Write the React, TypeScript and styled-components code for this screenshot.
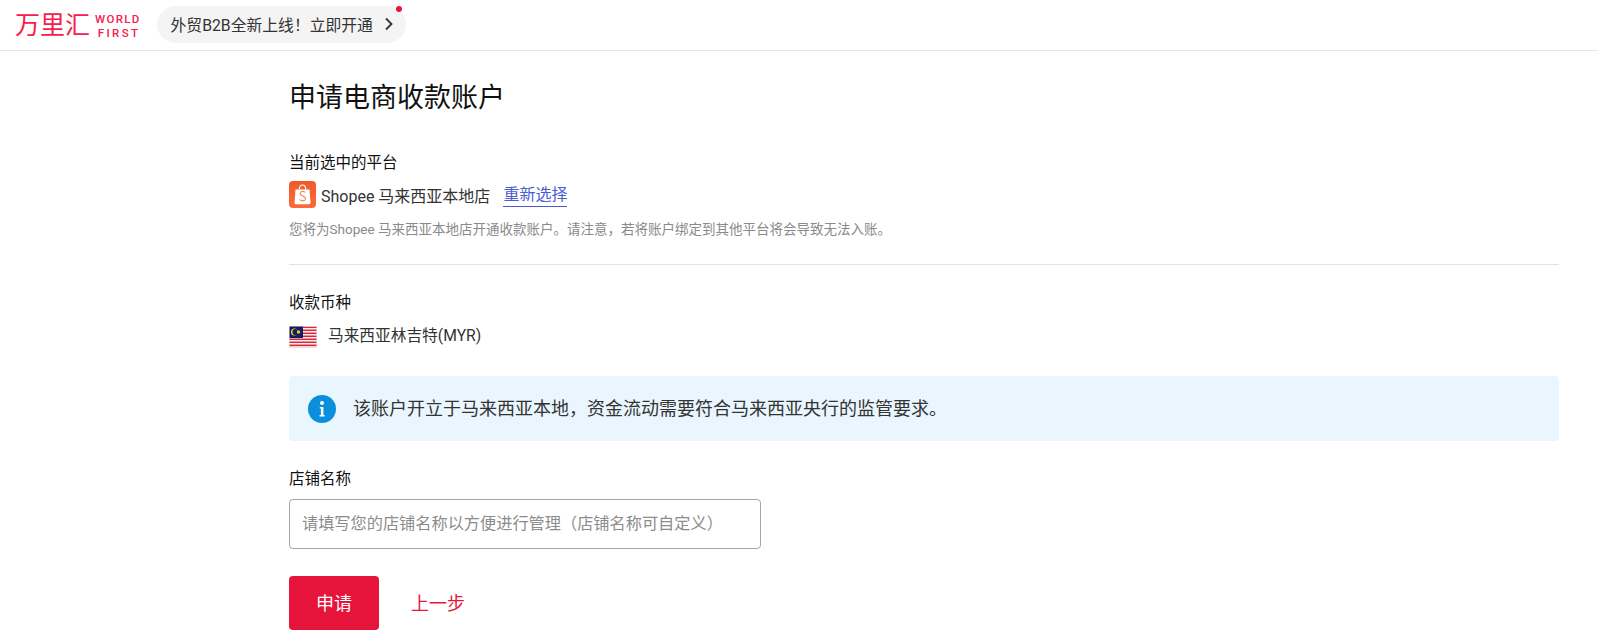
import React from "react";
import styled, { createGlobalStyle } from "styled-components";

const GlobalStyle = createGlobalStyle`
  html, body {
    margin: 0;
    padding: 0;
    background: #fff;
    font-family: Roboto, "Noto Sans CJK SC", sans-serif;
    color: #1a1a1a;
  }
  * { box-sizing: border-box; }
`;

const Page = styled.div`
  width: 1598px;
  height: 644px;
  overflow: hidden;
`;

const Header = styled.header`
  height: 51px;
  border-bottom: 1px solid #e5e5e5;
  display: flex;
  align-items: center;
  padding: 0 0 2px 15px;
`;

const Logo = styled.div`
  display: flex;
  align-items: center;
  gap: 5px;
  margin-top: 3px;
  color: #f5204f;
`;

const LogoName = styled.span`
  font-size: 25px;
  font-weight: 400;
  line-height: 28px;
`;

const LogoLatin = styled.div`
  font-family: Roboto, sans-serif;
  font-weight: 500;
  font-size: 11.5px;
  line-height: 14px;
`;

const LogoLine = styled.div<{ $spacing: number }>`
  letter-spacing: ${(p) => p.$spacing}px;
  text-align: right;
`;

const Promo = styled.div`
  position: relative;
  margin-left: 16px;
  width: 249px;
  height: 37px;
  border-radius: 19px;
  background: #f4f4f4;
  display: flex;
  align-items: center;
  justify-content: space-between;
  padding: 0 12px 0 14px;
  font-size: 15.8px;
  color: #333;
`;

const PromoDot = styled.span`
  position: absolute;
  top: 0;
  right: 4px;
  width: 6px;
  height: 6px;
  border-radius: 50%;
  background: #e8143c;
`;

const Main = styled.main`
  padding: 0 39px 0 289px;
`;

const Title = styled.h1`
  margin: 0;
  padding-top: 29px;
  font-size: 27px;
  font-weight: 400;
  line-height: 36px;
  color: #111;
`;

const Label = styled.div`
  font-size: 15.5px;
  font-weight: 400;
  line-height: 20px;
  color: #111;
`;

const PlatformSection = styled.section`
  margin-top: 37px;
  padding-bottom: 26px;
  border-bottom: 1px solid #e2e2e2;
`;

const PlatformRow = styled.div`
  display: flex;
  align-items: center;
  margin-top: 8px;
  height: 27px;
  font-size: 16px;
  color: #333;
`;

const PlatformName = styled.span`
  margin-left: 5px;
`;

const Reselect = styled.a`
  margin-left: 13px;
  padding-top: 2px;
  color: #4a5bd4;
  border-bottom: 1px solid #4a5bd4;
  line-height: 22px;
`;

const Hint = styled.p`
  margin: 12px 0 0;
  font-size: 13.5px;
  line-height: 18px;
  color: #8a8a8a;
`;

const CurrencySection = styled.section`
  margin-top: 28px;
`;

const CurrencyRow = styled.div`
  display: flex;
  align-items: center;
  gap: 11px;
  margin-top: 12px;
  font-size: 15.7px;
  line-height: 22px;
  color: #333;
  svg {
    margin: 1px 0 -1px;
  }
`;

const Notice = styled.div`
  margin-top: 29px;
  height: 65px;
  border-radius: 4px;
  background: #e9f6fe;
  display: flex;
  align-items: center;
  gap: 17px;
  padding: 0 0 3px 19px;
  font-size: 18px;
  color: #333;
`;

const NoticeIcon = styled.span`
  display: flex;
  margin-top: 3px;
`;

const NameSection = styled.section`
  margin-top: 28px;
`;

const NameInput = styled.input`
  display: block;
  margin-top: 10px;
  width: 472px;
  height: 50px;
  border: 1px solid #a6a6a6;
  border-radius: 4px;
  padding: 0 12px 2px;
  font-family: inherit;
  font-size: 16.2px;
  outline: none;
  &::placeholder {
    color: #8c8c8c;
    opacity: 1;
  }
`;

const Actions = styled.div`
  display: flex;
  align-items: center;
  margin-top: 27px;
`;

const Submit = styled.button`
  width: 90px;
  height: 54px;
  border: none;
  border-radius: 4px;
  padding: 0 0 3px;
  background: #e6133b;
  color: #fff;
  font-family: inherit;
  font-size: 18px;
`;

const Back = styled.a`
  margin: 0 0 3px 32px;
  font-size: 18px;
  color: #e8143c;
`;

const ShopeeIcon = () => (
  <svg width="27" height="27" viewBox="0 0 27 27">
    <defs>
      <linearGradient id="shopeeBg" x1="0" y1="0" x2="0" y2="1">
        <stop offset="0" stopColor="#f05a2a" />
        <stop offset="1" stopColor="#fb6a3c" />
      </linearGradient>
    </defs>
    <rect width="27" height="27" rx="4" fill="url(#shopeeBg)" />
    <path d="M6.5 8.5h14l1 13.2a1.6 1.6 0 0 1-1.6 1.6H7.1a1.6 1.6 0 0 1-1.6-1.6z" fill="#fff" />
    <path d="M10.3 8.5c0-6 6.4-6 6.4 0" fill="none" stroke="#fff" strokeWidth="1.2" />
    <path
      d="M16.2 11.4c-1.2-1.2-5-1.4-5 1.2 0 2.9 5.3 2 5.3 5 0 2.8-4.2 2.7-5.8 1.1"
      fill="none"
      stroke="#f05a2a"
      strokeWidth="1"
    />
  </svg>
);

const MalaysiaFlag = () => (
  <svg width="28" height="22" viewBox="0 0 28 22">
    <rect width="28" height="22" fill="#fff" />
    {[0, 3, 6, 9, 12, 15, 18].map((y) => (
      <rect key={y} y={y + 0.5} width="28" height="1.6" fill="#d8283c" />
    ))}
    <rect y="20.5" width="28" height="1" fill="#e8b8bc" />
    <rect width="14" height="12" fill="#0f1f66" />
    <circle cx="5.5" cy="6" r="3.6" fill="#f5c518" />
    <circle cx="6.6" cy="6" r="3.1" fill="#0f1f66" />
    <circle cx="9.5" cy="6" r="1.7" fill="#f5c518" />
    <rect x="0.25" y="0.25" width="27.5" height="21.5" fill="none" stroke="#e6e6e6" strokeWidth="0.5" />
  </svg>
);

const InfoIcon = () => (
  <svg width="28" height="28" viewBox="0 0 28 28">
    <circle cx="14" cy="14" r="14" fill="#0b8fdc" />
    <circle cx="14" cy="8" r="2" fill="#fff" />
    <path d="M11.8 12h3.6v8h1.2v1.6h-5V20h1.3v-6.4h-1.1z" fill="#fff" />
  </svg>
);

export default function App() {
  return (
    <Page>
      <GlobalStyle />
      <Header>
        <Logo>
          <LogoName>万里汇</LogoName>
          <LogoLatin>
            <LogoLine $spacing={1.3}>WORLD</LogoLine>
            <LogoLine $spacing={2.4}>FIRST</LogoLine>
          </LogoLatin>
        </Logo>
        <Promo>
          外贸B2B全新上线！立即开通
          <svg width="10" height="14" viewBox="0 0 10 14">
            <path d="M2 1.5 7.5 7 2 12.5" fill="none" stroke="#333" strokeWidth="1.8" />
          </svg>
          <PromoDot />
        </Promo>
      </Header>
      <Main>
        <Title>申请电商收款账户</Title>
        <PlatformSection>
          <Label>当前选中的平台</Label>
          <PlatformRow>
            <ShopeeIcon />
            <PlatformName>Shopee 马来西亚本地店</PlatformName>
            <Reselect>重新选择</Reselect>
          </PlatformRow>
          <Hint>您将为Shopee 马来西亚本地店开通收款账户。请注意，若将账户绑定到其他平台将会导致无法入账。</Hint>
        </PlatformSection>
        <CurrencySection>
          <Label>收款币种</Label>
          <CurrencyRow>
            <MalaysiaFlag />
            马来西亚林吉特(MYR)
          </CurrencyRow>
        </CurrencySection>
        <Notice>
          <NoticeIcon>
            <InfoIcon />
          </NoticeIcon>
          该账户开立于马来西亚本地，资金流动需要符合马来西亚央行的监管要求。
        </Notice>
        <NameSection>
          <Label>店铺名称</Label>
          <NameInput placeholder="请填写您的店铺名称以方便进行管理（店铺名称可自定义）" />
        </NameSection>
        <Actions>
          <Submit>申请</Submit>
          <Back>上一步</Back>
        </Actions>
      </Main>
    </Page>
  );
}
